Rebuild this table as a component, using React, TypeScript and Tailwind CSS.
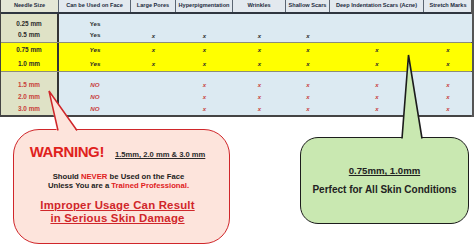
import React from 'react';

/**
 * Microneedle size chart with two callouts
 */

type Mark = '' | 'x';

interface Row {
  size: string;
  face: string;
  marks: Mark[];
}

interface Group {
  tone: 'blue' | 'yellow' | 'red';
  pad: string;
  line: string;
  height: string;
  rows: Row[];
}

const headers = [
  'Needle Size',
  'Can be Used on Face',
  'Large Pores',
  'Hyperpigmentation',
  'Wrinkles',
  'Shallow Scars',
  'Deep Indentation Scars (Acne)',
  'Stretch Marks',
];

const groups: Group[] = [
  {
    tone: 'blue',
    pad: 'pt-[5px]',
    line: 'h-[11px]',
    height: 'h-[28px]',
    rows: [
      { size: '0.25 mm', face: 'Yes', marks: ['', '', '', '', '', ''] },
      { size: '0.5 mm', face: 'Yes', marks: ['x', 'x', 'x', 'x', '', ''] },
    ],
  },
  {
    tone: 'yellow',
    pad: 'pt-0',
    line: 'h-[14px]',
    height: 'h-[28px]',
    rows: [
      { size: '0.75 mm', face: 'Yes', marks: ['x', 'x', 'x', 'x', 'x', 'x'] },
      { size: '1.0 mm', face: 'Yes', marks: ['x', 'x', 'x', 'x', 'x', 'x'] },
    ],
  },
  {
    tone: 'red',
    pad: 'pt-[7px]',
    line: 'h-[12px]',
    height: 'h-[43px]',
    rows: [
      { size: '1.5 mm', face: 'NO', marks: ['', 'x', 'x', 'x', 'x', 'x'] },
      { size: '2.0 mm', face: 'NO', marks: ['', 'x', 'x', 'x', 'x', 'x'] },
      { size: '3.0 mm', face: 'NO', marks: ['', 'x', 'x', 'x', 'x', 'x'] },
    ],
  },
];

const gridCols = 'grid grid-cols-[58px_72px_45px_57px_53px_44px_94px_48px]';

const SizeTable: React.FC = () => {
  return (
    <div className="w-[474px] border-l border-r-[3px] border-l-[#444] border-r-[#555] font-['Liberation_Sans',sans-serif]">
      {/* Header */}
      <div className={`${gridCols} h-[14px] border-b-2 border-[#2f3640] bg-[#e3e9ef]`}>
        {headers.map((h, i) => (
          <div
            key={h}
            className={`flex items-center justify-center border-r border-[#5b6572] text-[5.6px] font-bold leading-none text-[#1c2b40] whitespace-nowrap ${
              i === 0 ? 'bg-[#e4e7d6]' : ''
            } ${i === headers.length - 1 ? 'border-r-0' : ''}`}
          >
            {h}
          </div>
        ))}
      </div>

      {/* Body groups */}
      {groups.map((g, gi) => {
        const yellow = g.tone === 'yellow';
        const red = g.tone === 'red';
        const ink = red ? 'text-[#c8403a]' : 'text-[#2a2a2a]';
        const cellBg = yellow ? 'bg-[#ffff00]' : 'bg-[#dceaf2]';
        const sizeBg = yellow ? 'bg-[#ffff00]' : 'bg-[#dfe2c6]';
        const last = gi === groups.length - 1;
        return (
          <div
            key={gi}
            className={`${gridCols} ${g.height} ${
              last ? 'border-b-2 border-[#444]' : 'border-b border-[#8c8c7a]'
            } box-content`}
          >
            {/* Needle size column */}
            <div className={`${sizeBg} ${g.pad} border-r-2 border-[#333] flex flex-col`}>
              {g.rows.map((r) => (
                <div
                  key={r.size}
                  className={`${g.line} flex items-center justify-center text-[6.4px] font-bold leading-none ${ink}`}
                >
                  {r.size}
                </div>
              ))}
            </div>

            {/* Face column */}
            <div className={`${cellBg} ${g.pad} flex flex-col`}>
              {g.rows.map((r) => (
                <div
                  key={r.size}
                  className={`${g.line} flex items-center justify-center text-[6.2px] font-bold leading-none ${ink} ${
                    g.tone === 'blue' ? '' : 'italic'
                  }`}
                >
                  {r.face}
                </div>
              ))}
            </div>

            {/* Conditions */}
            {[0, 1, 2, 3, 4, 5].map((c) => (
              <div key={c} className={`${cellBg} ${g.pad} flex flex-col`}>
                {g.rows.map((r) => (
                  <div
                    key={r.size}
                    className={`${g.line} flex items-center justify-center text-[6px] font-bold italic leading-none ${ink}`}
                  >
                    {r.marks[c]}
                  </div>
                ))}
              </div>
            ))}
          </div>
        );
      })}
    </div>
  );
};

const WarningCallout: React.FC = () => (
  <div className="relative ml-[13px] mt-[12px] w-[217px] h-[115px] rounded-[26px] border-[1.5px] border-[#d0262a] bg-[#fde4dc] font-['Liberation_Sans',sans-serif] flex flex-col items-center">
    {/* tail pointing at the 1.5-3.0mm rows */}
    <svg
      className="absolute left-0 top-[-40px] overflow-visible"
      width="80"
      height="42"
      viewBox="0 0 80 42"
    >
      <polygon points="35,1 43,40 64,40 64,42.5 43,42.5" fill="#fde4dc" />
      <polygon points="35,1 44,41.5 63,41.5" fill="#fde4dc" />
      <polyline points="44,40.5 35,1 63,40.5" fill="none" stroke="#d0262a" strokeWidth="1.5" />
    </svg>

    <div className="mt-[14px] flex items-baseline gap-[11px] pr-[8px]">
      <span className="text-[15px] font-bold leading-none text-[#e0211c] tracking-[-0.4px]">WARNING!</span>
      <span className="text-[7.6px] font-bold leading-none text-[#2a2a2a] underline">1.5mm, 2.0 mm &amp; 3.0 mm</span>
    </div>

    <div className="mt-[13px] text-center text-[7.7px] font-bold leading-[9px] text-[#222] pr-[6px]">
      <div>
        Should <span className="text-[#e0211c]">NEVER</span> be Used on the Face
      </div>
      <div>
        Unless You are a <span className="text-[#e0211c]">Trained Professional.</span>
      </div>
    </div>

    <div className="mt-[9px] text-center text-[11.4px] font-bold leading-[13px] text-[#d0262a] underline tracking-[0.2px] pr-[8px]">
      <div>Improper Usage Can Result</div>
      <div>in Serious Skin Damage</div>
    </div>
  </div>
);

const PerfectCallout: React.FC = () => (
  <div className="relative ml-[70px] mt-[20px] w-[169px] h-[87px] rounded-[18px] border-[1.5px] border-[#1c1c1c] bg-[#c9e8b1] font-['Liberation_Sans',sans-serif] flex flex-col items-center">
    {/* tail pointing up into the 0.75 / 1.0mm rows */}
    <svg
      className="absolute left-0 top-[-84px] overflow-visible"
      width="130"
      height="86"
      viewBox="0 0 130 86"
    >
      <polygon points="107,1 101,86.5 121,86.5" fill="#c9e8b1" />
      <polyline points="101,84.5 107.5,1 121,84.5" fill="none" stroke="#1c1c1c" strokeWidth="1.6" />
    </svg>

    <div className="mt-[28px] text-[9.6px] font-bold leading-none text-[#222] underline">0.75mm, 1.0mm</div>
    <div className="mt-[9px] text-[10px] font-bold leading-none text-[#222]">Perfect for All Skin Conditions</div>
  </div>
);

export default function App() {
  return (
    <div className="w-[474px] h-[248px] overflow-hidden bg-white">
      <SizeTable />
      <div className="flex items-start">
        <WarningCallout />
        <PerfectCallout />
      </div>
    </div>
  );
}
